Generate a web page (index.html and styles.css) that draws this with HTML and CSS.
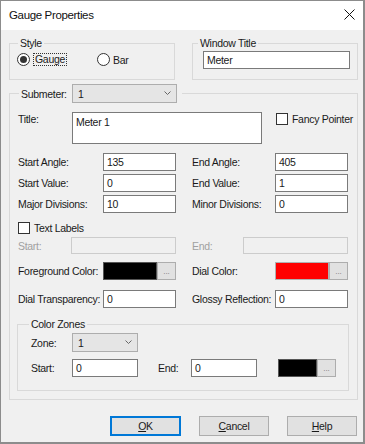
FILE: index.html
```html
<!DOCTYPE html>
<html lang="en">
<head>
  <meta charset="UTF-8" />
  <title>Gauge Properties</title>
  <link rel="stylesheet" href="styles.css">
</head>
<body>
  <div class="dialog">
    <div class="titlebar">
      <span class="title">Gauge Properties</span>
      <svg class="close" width="11" height="11" viewBox="0 0 11 11">
        <path d="M0.5 0.5 L10.5 10.5 M10.5 0.5 L0.5 10.5" stroke="#111" stroke-width="1" fill="none"/>
      </svg>
    </div>

    <div class="content">
      <div class="top">
        <fieldset class="group style-group">
          <legend>Style</legend>
          <div class="radios">
            <span class="radio checked"></span><span class="focus">Gauge</span>
            <span class="radio bar"></span><span>Bar</span>
          </div>
        </fieldset>
        <fieldset class="group wt-group">
          <legend>Window Title</legend>
          <div class="input wt-input">Meter</div>
        </fieldset>
      </div>

      <fieldset class="group sub-group">
        <legend class="sub-legend">
          <span class="sub-label">Submeter:</span>
          <span class="combo sub-combo">1<svg width="7" height="5" viewBox="0 0 7 5"><path d="M0.5 0.5 L3.5 3.5 L6.5 0.5" stroke="#666" fill="none"/></svg></span>
        </legend>

        <div class="title-row">
          <span class="title-label">Title:</span>
          <div class="input textarea">Meter 1</div>
          <span class="check"></span><span class="check-text">Fancy Pointer</span>
        </div>

        <div class="row r-first">
          <span class="lbl">Start Angle:</span><div class="input field">135</div>
          <span class="lbl right">End Angle:</span><div class="input field">405</div>
        </div>
        <div class="row">
          <span class="lbl">Start Value:</span><div class="input field">0</div>
          <span class="lbl right">End Value:</span><div class="input field">1</div>
        </div>
        <div class="row">
          <span class="lbl">Major Divisions:</span><div class="input field">10</div>
          <span class="lbl right">Minor Divisions:</span><div class="input field">0</div>
        </div>

        <div class="check-row">
          <span class="check"></span><span class="check-text">Text Labels</span>
        </div>
        <div class="row disabled">
          <span class="lbl short">Start:</span><div class="input wide off"></div>
          <span class="lbl right short2">End:</span><div class="input wide off"></div>
        </div>

        <div class="row r-color">
          <span class="lbl">Foreground Color:</span>
          <span class="swatch black"></span><span class="dots">...</span>
          <span class="lbl right">Dial Color:</span>
          <span class="swatch red"></span><span class="dots">...</span>
        </div>
        <div class="row r-dial">
          <span class="lbl">Dial Transparency:</span><div class="input field">0</div>
          <span class="lbl right">Glossy Reflection:</span><div class="input field">0</div>
        </div>

        <fieldset class="group zones">
          <legend>Color Zones</legend>
          <div class="zrow">
            <span class="zlbl">Zone:</span>
            <span class="combo zone-combo">1<svg width="7" height="5" viewBox="0 0 7 5"><path d="M0.5 0.5 L3.5 3.5 L6.5 0.5" stroke="#666" fill="none"/></svg></span>
          </div>
          <div class="zrow z-second">
            <span class="zlbl">Start:</span><div class="input zfield">0</div>
            <span class="zlbl zend">End:</span><div class="input zfield">0</div>
            <span class="swatch black zswatch"></span><span class="dots">...</span>
          </div>
        </fieldset>
      </fieldset>

      <div class="buttons">
        <span class="btn default"><u>O</u>K</span>
        <span class="btn"><u>C</u>ancel</span>
        <span class="btn"><u>H</u>elp</span>
      </div>
    </div>
  </div>
</body>
</html>
```

FILE: styles.css
```css
* {
  margin: 0;
  padding: 0;
  box-sizing: border-box;
}

body {
  font-family: "Liberation Sans", Arial, sans-serif;
  font-size: 10.5px;
  letter-spacing: -0.3px;
  color: #1a1a1a;
  background: #fff;
}

.dialog {
  width: 365px;
  height: 444px;
  background: #f0f0f0;
  border: 1px solid #8c8c8c;
  border-right-width: 2px;
  border-bottom-width: 2px;
}

.titlebar {
  height: 29px;
  background: #fff;
  display: flex;
  align-items: center;
  justify-content: space-between;
  padding: 0 8px 1px 8px;
}

.title {
  font-size: 11.5px;
  letter-spacing: -0.35px;
  color: #111;
}

.close {
  margin-top: -1px;
}

.content {
  padding: 7px 0 0 8px;
}

/* group boxes */
.group {
  border: 1px solid #d9d9d9;
  min-width: 0;
}

.group legend {
  line-height: 12px;
  padding: 0 2px;
}

.top {
  display: flex;
  gap: 17px;
}

.style-group {
  width: 166px;
  height: 43px;
}

.style-group legend {
  margin-left: 8px;
}

.radios {
  display: flex;
  align-items: center;
  padding: 4px 0 0 7px;
}

.radio {
  width: 13px;
  height: 13px;
  border: 1px solid #333;
  border-radius: 50%;
  background: #fff;
  display: flex;
  align-items: center;
  justify-content: center;
  margin-right: 3px;
}

.radio.checked::after {
  content: "";
  width: 7px;
  height: 7px;
  border-radius: 50%;
  background: #333;
}

.radio.bar {
  margin-left: 30px;
}

.focus {
  border: 1px dotted #333;
  padding: 0 1px;
  line-height: 11px;
}

.wt-group {
  width: 166px;
  height: 43px;
}

.wt-group legend {
  margin-left: 5px;
}

.input {
  background: #fff;
  border: 1px solid #7a7a7a;
  height: 18px;
  line-height: 16px;
  padding-left: 3px;
}

.wt-input {
  width: 147px;
  margin: 2px 0 0 10px;
}

/* submeter group */
.sub-group {
  width: 349px;
  height: 316px;
  margin-top: 4px;
  padding-left: 8px;
}

.sub-group > legend.sub-legend {
  display: flex;
  align-items: center;
  margin-left: 1px;
  padding: 0 5px 0 2px;
  line-height: normal;
}

.sub-label {
  width: 51px;
}

.combo {
  display: flex;
  align-items: center;
  justify-content: space-between;
  height: 19px;
  background: #e5e5e5;
  border: 1px solid #adadad;
  padding: 0 5px 0 5px;
}

.sub-combo {
  width: 105px;
}

.title-row {
  display: flex;
  align-items: flex-start;
  margin-top: 9px;
}

.title-label {
  width: 54px;
  padding-top: 1px;
}

.textarea {
  width: 190px;
  height: 32px;
  padding-top: 1px;
}

.check {
  width: 12px;
  height: 12px;
  border: 1px solid #333;
  background: #fff;
  margin-right: 4px;
}

.title-row .check {
  margin-left: 14px;
  margin-top: 1px;
}

.check-text {
  line-height: 12px;
}

.title-row .check-text {
  line-height: 14px;
}

.row {
  display: flex;
  align-items: center;
  height: 18px;
  margin-top: 3px;
}

.row.r-first {
  margin-top: 9px;
}

.lbl {
  width: 85px;
}

.lbl.right {
  width: 83px;
  margin-left: 16px;
}

.field {
  width: 73px;
}

.check-row {
  display: flex;
  align-items: center;
  margin-top: 9px;
}

.row.disabled {
  height: 17px;
}

.disabled .lbl {
  color: #a0a0a0;
}

.lbl.short {
  width: 53px;
}

.lbl.short2 {
  width: 51px;
}

.wide {
  width: 105px;
  height: 17px;
}

.input.off {
  background: #f0f0f0;
  border-color: #cccccc;
}

.row.r-color {
  margin-top: 8px;
}

.swatch {
  width: 54px;
  height: 18px;
  border: 1px solid #555;
}

.black {
  background: #000;
}

.red {
  background: #ff0000;
  border-color: #b0b0b0;
}

.dots {
  width: 19px;
  height: 18px;
  background: #e1e1e1;
  border: 1px solid #adadad;
  color: #777;
  font-size: 8px;
  text-align: center;
  line-height: 18px;
  letter-spacing: 0;
}

.row.r-dial {
  margin-top: 10px;
}

/* color zones */
.zones {
  width: 332px;
  height: 73px;
  margin: 10px 0 0 -1px;
  padding-left: 13px;
}

.zones legend {
  margin-left: -2px;
}

.zrow {
  display: flex;
  align-items: center;
  margin-top: 3px;
}

.zrow.z-second {
  margin-top: 7px;
}

.zlbl {
  width: 41px;
}

.zend {
  width: 33px;
  margin-left: 20px;
}

.zone-combo {
  width: 66px;
}

.zfield {
  width: 66px;
}

.zswatch {
  width: 39px;
  margin-left: 21px;
}

/* buttons */
.buttons {
  display: flex;
  justify-content: flex-end;
  gap: 18px;
  margin-top: 16px;
  padding-right: 6px;
}

.btn {
  width: 70px;
  height: 20px;
  background: #e1e1e1;
  border: 1px solid #adadad;
  display: flex;
  align-items: center;
  justify-content: center;
}

.btn.default {
  width: 71px;
  border-color: #0078d7;
  box-shadow: inset 0 0 0 1px #0078d7;
}
```
